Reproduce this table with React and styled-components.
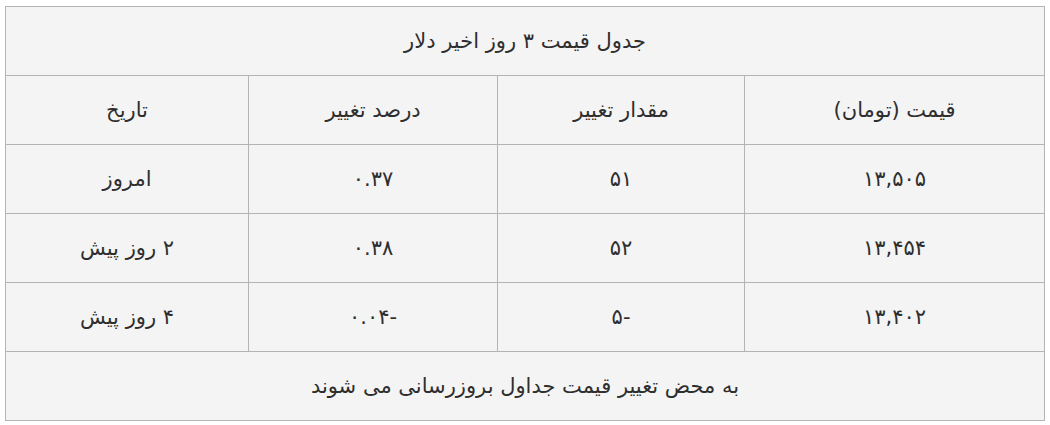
import React from 'react';
import styled, { createGlobalStyle } from 'styled-components';

const GlobalStyle = createGlobalStyle`
  body {
    margin: 0;
    background: #ffffff;
    font-family: "DejaVu Sans", "Noto Sans", sans-serif;
  }
`;

const Wrapper = styled.div`
  padding: 6px 0 0 5px;
`;

const Table = styled.table`
  direction: rtl;
  width: 1039px;
  border-collapse: collapse;
  background: #f4f4f4;
  color: #2e2e2e;
  font-size: 21px;
  table-layout: fixed;
`;

const Cell = styled.td`
  border: 1px solid #b4b4b4;
  height: 68px;
  padding: 0;
  text-align: center;
  vertical-align: middle;
`;

const HeadCell = styled(Cell).attrs({ as: 'th' })`
  font-weight: normal;
`;

const rows = [
  { price: '۱۳,۵۰۵', amount: '۵۱', percent: '۰.۳۷', date: 'امروز' },
  { price: '۱۳,۴۵۴', amount: '۵۲', percent: '۰.۳۸', date: '۲ روز پیش' },
  { price: '۱۳,۴۰۲', amount: '-۵', percent: '-۰.۰۴', date: '۴ روز پیش' },
];

export default function App() {
  return (
    <>
      <GlobalStyle />
      <Wrapper>
        <Table>
          <colgroup>
            <col style={{ width: 300 }} />
            <col style={{ width: 247 }} />
            <col style={{ width: 249 }} />
            <col style={{ width: 243 }} />
          </colgroup>
          <tbody>
            <tr>
              <Cell colSpan={4}>جدول قیمت ۳ روز اخیر دلار</Cell>
            </tr>
            <tr>
              <HeadCell>قیمت (تومان)</HeadCell>
              <HeadCell>مقدار تغییر</HeadCell>
              <HeadCell>درصد تغییر</HeadCell>
              <HeadCell>تاریخ</HeadCell>
            </tr>
            {rows.map((r) => (
              <tr key={r.date}>
                <Cell>{r.price}</Cell>
                <Cell>{r.amount}</Cell>
                <Cell>{r.percent}</Cell>
                <Cell>{r.date}</Cell>
              </tr>
            ))}
            <tr>
              <Cell colSpan={4}>به محض تغییر قیمت جداول بروزرسانی می شوند</Cell>
            </tr>
          </tbody>
        </Table>
      </Wrapper>
    </>
  );
}
